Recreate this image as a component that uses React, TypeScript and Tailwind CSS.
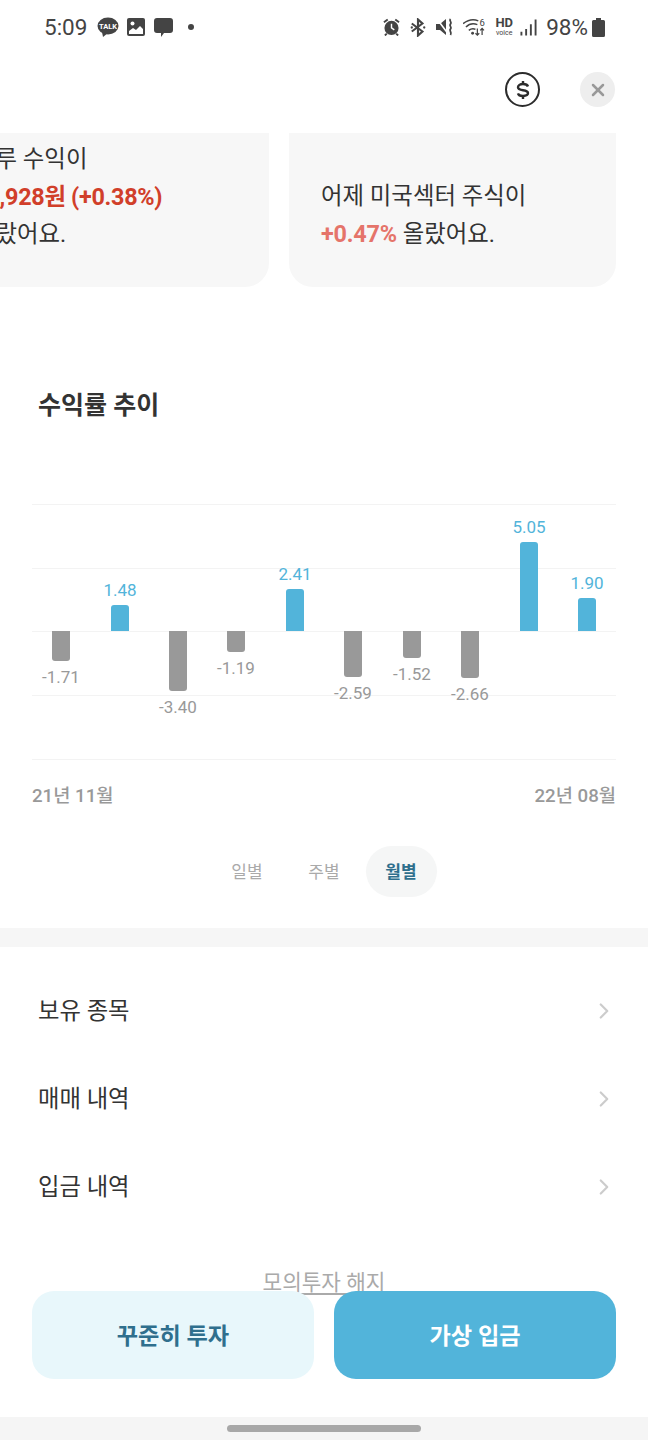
import { ChevronRight, X } from 'lucide-react';

const bars = [
  { x: 52, v: '-1.71', h: 30, labelY: 683 },
  { x: 111, v: '1.48', h: 26, labelY: 596 },
  { x: 169, v: '-3.40', h: 60, labelY: 713 },
  { x: 227, v: '-1.19', h: 21, labelY: 674 },
  { x: 286, v: '2.41', h: 42, labelY: 580 },
  { x: 344, v: '-2.59', h: 46, labelY: 699 },
  { x: 403, v: '-1.52', h: 27, labelY: 680 },
  { x: 461, v: '-2.66', h: 47, labelY: 700 },
  { x: 520, v: '5.05', h: 89, labelY: 533 },
  { x: 578, v: '1.90', h: 33, labelY: 589 },
];

const gridLines = [504.5, 568.5, 631.5, 695.5, 759.5];
const menuItems = ['보유 종목', '매매 내역', '입금 내역'];
const font = "font-['Roboto','Noto_Sans_CJK_KR',sans-serif]";

function StatusBar() {
  return (
    <div className="h-[54px] flex items-center justify-between pl-[44px] pr-[43px] text-[#444]">
      <div className="flex items-center">
        <span className="text-[22.5px] leading-none w-[53px] pt-[1px]">5:09</span>
        <svg width="22" height="20" viewBox="0 0 22 20" className="mr-[8px]">
          <ellipse cx="11" cy="9" rx="10.500" ry="8.500" fill="#444" />
          <path d="M5 15l1 5 5-4z" fill="#444" />
          <text x="11" y="12" textAnchor="middle" fontSize="7.500" fontWeight="700" fill="#fff">TALK</text>
        </svg>
        <svg width="18" height="18" viewBox="0 0 18 18" className="mr-[9px]">
          <rect width="18" height="18" rx="2" fill="#444" />
          <circle cx="5.500" cy="5.500" r="2" fill="#fff" />
          <path d="M2 16v-3l4-3 3 2 4-4 3 3v5z" fill="#fff" />
        </svg>
        <svg width="19" height="19" viewBox="0 0 19 19" className="mr-[15px]">
          <path d="M3 0h13a3 3 0 013 3v9a3 3 0 01-3 3h-6l-3 4v-4H3a3 3 0 01-3-3V3a3 3 0 013-3z" fill="#444" />
        </svg>
        <span className="w-[6px] h-[6px] rounded-full bg-[#444]" />
      </div>
      <div className="flex items-center">
        <svg width="17" height="18" viewBox="0 0 18 18" className="mr-[10px]">
          <circle cx="9" cy="10" r="7.500" fill="#444" />
          <path d="M9 5.500V10l3 2" stroke="#fff" strokeWidth="1.500" fill="none" />
          <path d="M1 4l4-3M17 4l-4-3" stroke="#444" strokeWidth="2" />
          <path d="M4 16l-2 2M14 16l2 2" stroke="#444" strokeWidth="2" />
        </svg>
        <svg width="16" height="19" viewBox="0 0 18 20" className="mr-[10px]">
          <path d="M2 5.500l12 9-5 4.500V1l5 4.500-12 9" stroke="#444" strokeWidth="2.400" fill="none" />
          <circle cx="2" cy="10" r="1.300" fill="#444" />
          <circle cx="16" cy="10" r="1.300" fill="#444" />
        </svg>
        <svg width="18" height="18" viewBox="0 0 18 18" className="mr-[9px]">
          <path d="M0 6h4l6-5v16l-6-5H0z" fill="#444" />
          <path d="M1 1l12 16" stroke="#fff" strokeWidth="1.500" />
          <path d="M14.500 1c-2 2 2 3 0 5s2 3 0 5 2 3 0 6" stroke="#444" strokeWidth="1.800" fill="none" />
        </svg>
        <svg width="23" height="19" viewBox="0 0 24 20" className="mr-[8px]">
          <path d="M0 6c5-4 11-5 16-3M3 9.500c3-3 8-4 12-2.500M6 13c2-1.500 5-2 7-1" stroke="#444" strokeWidth="1.600" fill="none" />
          <circle cx="10" cy="16" r="1.500" fill="#444" />
          <text x="20" y="8" fontSize="10" textAnchor="middle" fill="#444">6</text>
          <path d="M15 11v7m-2-2l2 2 2-2M20 18v-7m-2 2l2-2 2 2" stroke="#444" strokeWidth="1.300" fill="none" />
        </svg>
        <div className="flex flex-col items-center mr-[6px] leading-none w-[20px]">
          <span className="text-[13px] font-bold leading-[12px]">HD</span>
          <span className="text-[7px] leading-[8px]">voice</span>
        </div>
        <svg width="17" height="18" viewBox="0 0 18 18" className="mr-[9px]">
          <path d="M1.500 14v4M6.500 11v7M11.500 6v12M16.500 1v17" stroke="#444" strokeWidth="2" />
        </svg>
        <span className="text-[22.5px] leading-none mr-[4px] pt-[1px]">98%</span>
        <svg width="13" height="19" viewBox="0 0 13 19">
          <path d="M4 0h5v2h2.500a1.500 1.500 0 011.500 1.500V17.500a1.500 1.500 0 01-1.500 1.500h-10A1.500 1.500 0 010 17.500V3.500A1.500 1.500 0 011.500 2H4z" fill="#444" />
        </svg>
      </div>
    </div>
  );
}

function Chart() {
  return (
    <svg width="648" height="300" viewBox="0 490 648 300" className="block">
      {gridLines.map((y) => (
        <line key={y} x1="32" x2="616" y1={y} y2={y} stroke="#f3f3f3" strokeWidth="1" />
      ))}
      {bars.map((b) => {
        const up = !b.v.startsWith('-');
        const color = up ? '#52b4da' : '#999999';
        const d = up
          ? `M${b.x} 631v-${b.h - 3}a3 3 0 013-3h12a3 3 0 013 3v${b.h - 3}z`
          : `M${b.x} 631v${b.h - 3}a3 3 0 003 3h12a3 3 0 003-3v-${b.h - 3}z`;
        return (
          <g key={b.x}>
            <path d={d} fill={color} />
            <text x={b.x + 9} y={b.labelY} textAnchor="middle" fontSize="17" fill={color}>
              {b.v}
            </text>
          </g>
        );
      })}
    </svg>
  );
}

export default function App() {
  return (
    <div className={`w-[648px] h-[1440px] bg-white overflow-hidden flex flex-col ${font}`}>
      <StatusBar />

      <div className="h-[79px] pt-[18px] flex justify-end gap-[40px] pr-[33px]">
        <div className="w-[35px] h-[35px] rounded-full border-[2.500px] border-[#2c2c2c] flex items-center justify-center">
          <svg width="14" height="20" viewBox="0 0 14 20" fill="none" stroke="#2c2c2c" strokeWidth="2.400">
            <path d="M7 1v3M7 16v3" />
            <path d="M12 6.500C11.500 5 10 4 7 4 4 4 2 5.300 2 7.200c0 2 2 2.600 5 3 3 .4 5 1 5 2.900 0 1.700-2 2.900-5 2.900s-4.600-1-5-2.600" />
          </svg>
        </div>
        <div className="w-[35px] h-[35px] rounded-full bg-[#eeeeee] flex items-center justify-center">
          <X className="w-[20px] h-[20px] text-[#999999]" strokeWidth={3} />
        </div>
      </div>

      {/* 카드는 가로 스크롤 중간 위치 */}
      <div className="flex gap-[20px] -ml-[58px] text-[#333] text-[23.400px] leading-[37.500px]">
        <div className="w-[327px] h-[154px] shrink-0 bg-[#f7f7f7] rounded-b-[24px] pl-[32px] pt-[8px]">
          <p className="whitespace-nowrap">하루 수익이</p>
          <p className="whitespace-nowrap font-bold tracking-[-0.3px] text-[#d13f2a]">+1,928원 (+0.38%)</p>
          <p className="whitespace-nowrap">올랐어요.</p>
        </div>
        <div className="w-[327px] h-[154px] shrink-0 bg-[#f7f7f7] rounded-b-[24px] pl-[32px] pt-[45px]">
          <p className="whitespace-nowrap">어제 미국섹터 주식이</p>
          <p className="whitespace-nowrap">
            <span className="font-bold tracking-[-0.2px] text-[#e5746a]">+0.47%</span> 올랐어요.
          </p>
        </div>
      </div>

      <h2 className="mt-[100px] ml-[38px] h-[36px] leading-[38px] text-[25px] font-bold text-[#333333]">수익률 추이</h2>

      <div className="mt-[67px]">
        <Chart />
      </div>

      <div className="-mt-[7px] flex justify-between px-[32px] text-[18.700px] leading-[26px] font-medium text-[#999999]">
        <span>21년 11월</span>
        <span>22년 08월</span>
      </div>

      <div className="mt-[37px] flex justify-center gap-[6px] text-[17px]">
        <div className="w-[71px] h-[51px] pt-[2px] flex items-center justify-center text-[#aaaaaa]">일별</div>
        <div className="w-[71px] h-[51px] pt-[2px] flex items-center justify-center text-[#aaaaaa]">주별</div>
        <div className="w-[71px] h-[51px] pt-[2px] flex items-center justify-center rounded-full bg-[#f5f6f6] font-bold text-[#2f6f8d]">월별</div>
      </div>

      <div className="mt-[31px] h-[19px] bg-[#f6f6f6]" />

      <div className="mt-[20px] flex flex-col">
        {menuItems.map((item) => (
          <div key={item} className="h-[88px] flex items-center justify-between pl-[38px] pr-[31px] text-[23.300px] text-[#333333]">
            <span className="pt-[1px]">{item}</span>
            <ChevronRight className="w-[26px] h-[26px] text-[#cccccc]" strokeWidth={2} />
          </div>
        ))}
      </div>

      <div className="mt-[39px] flex justify-center">
        <span className="text-[21.300px] leading-[25px] text-[#aaaaaa] underline underline-offset-[3px]">모의투자 해지</span>
      </div>

      <div className="relative -mt-[4px] mx-[32px] flex gap-[20px] text-[23.200px] font-bold">
        <button className="flex-1 h-[88px] pt-[2px] rounded-[22px] bg-[#e8f7fb] text-[#2f6f8d]">꾸준히 투자</button>
        <button className="flex-1 h-[88px] pt-[2px] rounded-[22px] bg-[#52b4da] text-white">가상 입금</button>
      </div>

      <div className="mt-[38px] h-[23px] bg-[#f5f5f5] flex justify-center pt-[8px]">
        <div className="w-[194px] h-[7px] rounded-full bg-[#a8a8a8]" />
      </div>
    </div>
  );
}
